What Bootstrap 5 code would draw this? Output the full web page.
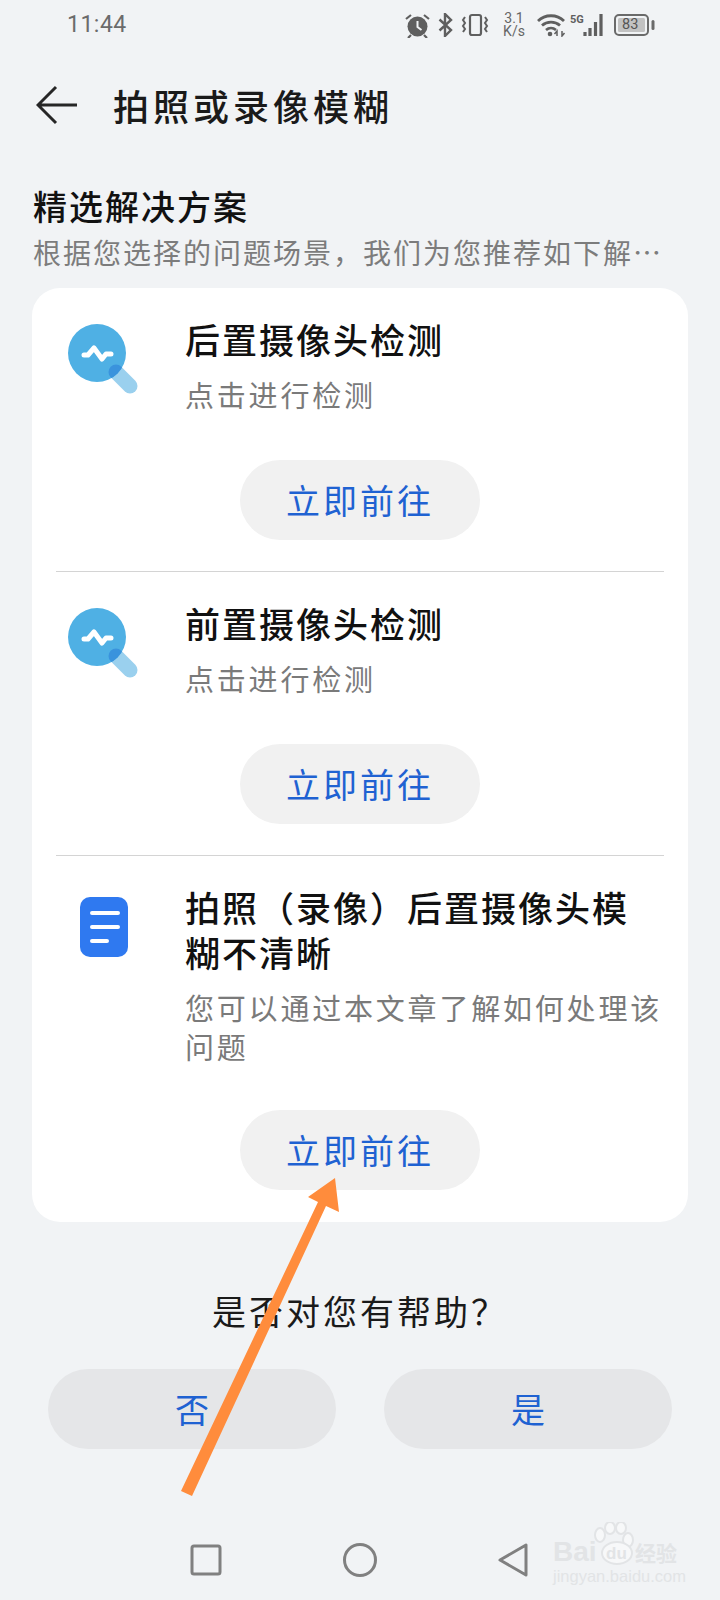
<!DOCTYPE html>
<html lang="zh">
<head>
<meta charset="utf-8">
<title>拍照或录像模糊</title>
<link href="https://cdn.jsdelivr.net/npm/bootstrap@5.3.0/dist/css/bootstrap.min.css" rel="stylesheet">
<style>
html,body{margin:0;background:#f1f3f5}
.screen{width:720px;height:1600px;overflow:hidden;background:#f1f3f5;font-family:"Noto Sans CJK SC","Liberation Sans",sans-serif;color:#111}
.statusbar{height:50px;padding:0 65px 0 67px;color:#666}
.clock{font:400 23px/1 Roboto,sans-serif;letter-spacing:.5px;color:#6b6b6b;margin-top:-1px}
.speed{font:400 14px/13px Roboto,sans-serif;color:#666;width:26px;margin:0 10px 0 12px;text-align:center}
.topbar{height:72px;margin-top:19px;padding-left:36px}
.page-title{font-size:36px;line-height:50px;font-weight:500;letter-spacing:4px;margin:0 0 0 35px;color:#1a1a1a}
.sec-title{font-size:34px;line-height:40px;font-weight:500;letter-spacing:2px;margin:0;color:#111}
.sec-sub{font-size:28px;line-height:36px;letter-spacing:2px;color:#7c7c7c;margin:8px 0 0;white-space:nowrap}
.section-head{margin-top:45px;padding-left:33px;height:80px}
.sol-card{width:656px;margin:22px 0 0 32px;background:#fff;border:0;border-radius:28px;padding:0 24px}
.sol-item{padding:28px 0 31px}
.sol-item:last-child{padding-bottom:32px}
.sol-item:last-child .go-btn{margin-top:44px}
.sol-item+.sol-item{border-top:1px solid #d4d4d4}
.sol-icon{width:129px;flex:none}
.sol-title{font-size:35px;line-height:45px;letter-spacing:2px;font-weight:500;margin:0;color:#111}
.sol-sub{font-size:29px;line-height:39px;letter-spacing:2.8px;color:#7a7a7a;margin:14px 0 0;white-space:nowrap}
.go-btn{display:block;width:240px;height:80px;margin:46px auto 0;background:#f1f1f1;border:0;color:#1f62d2;font-size:34px;line-height:80px;letter-spacing:3px;padding:0}
.question{font-size:34px;line-height:46px;letter-spacing:3px;text-align:center;color:#1a1a1a;margin:66px 0 0}
.answers{margin-top:35px;padding:0 48px;gap:48px}
.ans-btn{width:288px;height:80px;background:#e5e6e8;border:0;color:#1f62d2;font-size:34px;line-height:80px;padding:0}
.navkeys{margin-top:93px;padding-left:189px;gap:119px}
.overlay-arrow{position:absolute;left:0;top:0;pointer-events:none}
.wm{position:absolute;left:553px;top:1520px;width:130px;height:68px;color:#e2e4e6;pointer-events:none}
.wm-bai{position:absolute;left:0;top:17px;font:700 28px/30px "Liberation Sans",sans-serif}
.wm-du{position:absolute;left:53px;top:24px;font:700 17px/20px "Liberation Sans",sans-serif}
.wm-jy{position:absolute;left:82px;top:20px;font-size:21px;line-height:24px;font-weight:700}
.wm-url{position:absolute;left:0;top:47px;font:400 16.5px/18px "Liberation Sans",sans-serif}
</style>
</head>
<body>
<div class="screen position-relative">

  <div class="statusbar d-flex align-items-center">
    <span class="clock">11:44</span>
    <div class="d-flex align-items-center ms-auto">
      <svg width="25" height="25" viewBox="0 0 25 25" class="me-2"><circle cx="12.500" cy="13.500" r="10" fill="#5f5f5f"/><path d="M12.500 8v6l4 3" stroke="#f1f3f5" stroke-width="2" fill="none"/><path d="M1 6l5-4M24 6l-5-4M6 22l-3 3M19 22l3 3" stroke="#5f5f5f" stroke-width="2.200"/></svg>
      <svg width="15" height="24" viewBox="0 0 15 24" class="me-2"><path d="M1.500 6.500 13 17l-6 6V1l6 6L1.500 17.500" stroke="#5f5f5f" stroke-width="2.400" fill="none"/></svg>
      <svg width="28" height="24" viewBox="0 0 28 24"><rect x="9" y="2" width="11" height="20" rx="2" fill="none" stroke="#5f5f5f" stroke-width="2.200"/><path d="M4 4l-2 3 2 3-2 3 2 3-2 3M24 4l2 3-2 3 2 3-2 3 2 3" stroke="#5f5f5f" stroke-width="2" fill="none"/></svg>
      <div class="speed">3.1<br>K/s</div>
      <svg width="29" height="24" viewBox="0 0 29 24"><path d="M1 8c7-7 19-7 26 0M5 12.500c5-4.500 13-4.500 18 0M9 17c3-2.500 7-2.500 10 0" stroke="#5f5f5f" stroke-width="2.800" fill="none"/><circle cx="13" cy="21" r="2.300" fill="#5f5f5f"/><path d="M20 23v-5l-2.500 3M25 18v5l2.500-3" stroke="#5f5f5f" stroke-width="1.500" fill="none"/></svg>
      <svg width="36" height="24" viewBox="0 0 36 24" class="ms-1"><text x="0" y="10" font-family="Roboto,sans-serif" font-size="11" font-weight="700" fill="#5f5f5f">5G</text><path d="M15 19v4M20 15v8M25.500 9v14M31 1v22" stroke="#5f5f5f" stroke-width="3.200" fill="none"/></svg>
      <div class="position-relative ms-2" style="width:41px;height:22px">
        <svg width="41" height="22" viewBox="0 0 41 22" class="position-absolute top-0 start-0"><rect x="1" y="1" width="33" height="20" rx="4" fill="none" stroke="#6a6a6a" stroke-width="2"/><rect x="4" y="4" width="27" height="14" rx="1.500" fill="#c2c2c2"/><rect x="37.500" y="6" width="3" height="10" rx="1.500" fill="#6a6a6a"/></svg>
        <span class="position-absolute" style="left:8px;top:3px;font:400 14.500px/16px Roboto,sans-serif;color:#555">83</span>
      </div>
    </div>
  </div>

  <div class="topbar d-flex align-items-center">
    <svg width="42" height="40" viewBox="0 0 42 40"><path d="M41 20H2M20 2 2 20l18 18" stroke="#262626" stroke-width="3" fill="none"/></svg>
    <h1 class="page-title">拍照或录像模糊</h1>
  </div>

  <div class="section-head">
    <h2 class="sec-title">精选解决方案</h2>
    <p class="sec-sub">根据您选择的问题场景，我们为您推荐如下解…</p>
  </div>

  <div class="card sol-card">
    <div class="sol-item">
      <div class="d-flex">
        <div class="sol-icon">
          <svg width="80" height="80" viewBox="0 0 80 80" style="margin-left:11px;display:block"><defs><clipPath id="lens1"><circle cx="30" cy="37" r="29"/></clipPath></defs><path d="M49 56 63 70" stroke="#9ad0ee" stroke-width="15" stroke-linecap="round"/><circle cx="30" cy="37" r="29" fill="#4fb0e4"/><path d="M49 56 63 70" stroke="#3a93dd" stroke-width="15" stroke-linecap="round" clip-path="url(#lens1)"/><path d="M17 39h4l6-7 8 11 4-5h5" stroke="#fff" stroke-width="5" stroke-linecap="round" stroke-linejoin="round" fill="none"/></svg>
        </div>
        <div>
          <h3 class="sol-title">后置摄像头检测</h3>
          <p class="sol-sub">点击进行检测</p>
        </div>
      </div>
      <button type="button" class="btn rounded-pill go-btn">立即前往</button>
    </div>
    <div class="sol-item">
      <div class="d-flex">
        <div class="sol-icon">
          <svg width="80" height="80" viewBox="0 0 80 80" style="margin-left:11px;display:block"><defs><clipPath id="lens2"><circle cx="30" cy="37" r="29"/></clipPath></defs><path d="M49 56 63 70" stroke="#9ad0ee" stroke-width="15" stroke-linecap="round"/><circle cx="30" cy="37" r="29" fill="#4fb0e4"/><path d="M49 56 63 70" stroke="#3a93dd" stroke-width="15" stroke-linecap="round" clip-path="url(#lens2)"/><path d="M17 39h4l6-7 8 11 4-5h5" stroke="#fff" stroke-width="5" stroke-linecap="round" stroke-linejoin="round" fill="none"/></svg>
        </div>
        <div>
          <h3 class="sol-title">前置摄像头检测</h3>
          <p class="sol-sub">点击进行检测</p>
        </div>
      </div>
      <button type="button" class="btn rounded-pill go-btn">立即前往</button>
    </div>
    <div class="sol-item">
      <div class="d-flex">
        <div class="sol-icon">
          <svg width="60" height="62" viewBox="0 0 60 62" style="margin:13px 0 0 24px;display:block"><rect x="0" y="0" width="48" height="60" rx="10" fill="#2f79f0"/><path d="M12 16h26M12 30h26M12 44h15" stroke="#fff" stroke-width="4" stroke-linecap="round"/></svg>
        </div>
        <div>
          <h3 class="sol-title">拍照（录像）后置摄像头模<br>糊不清晰</h3>
          <p class="sol-sub">您可以通过本文章了解如何处理该<br>问题</p>
        </div>
      </div>
      <button type="button" class="btn rounded-pill go-btn">立即前往</button>
    </div>
  </div>

  <p class="question">是否对您有帮助？</p>
  <div class="answers d-flex">
    <button type="button" class="btn rounded-pill ans-btn">否</button>
    <button type="button" class="btn rounded-pill ans-btn">是</button>
  </div>

  <div class="navkeys d-flex align-items-center">
    <svg width="34" height="34" viewBox="0 0 34 34"><rect x="3" y="3" width="28" height="28" rx="2" fill="none" stroke="#808080" stroke-width="3"/></svg>
    <svg width="36" height="36" viewBox="0 0 36 36"><circle cx="18" cy="18" r="15.500" fill="none" stroke="#808080" stroke-width="3"/></svg>
    <svg width="32" height="36" viewBox="0 0 32 36"><path d="M29 3v30L3 18z" fill="none" stroke="#808080" stroke-width="3" stroke-linejoin="round"/></svg>
  </div>

  <svg class="overlay-arrow" width="720" height="1600" viewBox="0 0 720 1600"><path d="M181 1491 192 1496 326 1206 339 1212 335 1178 308 1197 318 1202z" fill="#ff8c3c"/></svg>

  <div class="wm">
    <svg width="60" height="50" viewBox="0 0 60 50" class="position-absolute" style="left:38px;top:2px"><g fill="#f7f8f9" stroke="#e2e4e6" stroke-width="2"><ellipse cx="9" cy="13" rx="5" ry="7"/><ellipse cx="19" cy="6" rx="5" ry="6"/><ellipse cx="30" cy="6" rx="5" ry="6"/><ellipse cx="37" cy="18" rx="5" ry="7"/><ellipse cx="26" cy="31" rx="15" ry="11"/></g></svg>
    <span class="wm-bai">Bai</span>
    <span class="wm-du">du</span>
    <span class="wm-jy">经验</span>
    <span class="wm-url">jingyan.baidu.com</span>
  </div>

</div>
<script src="https://cdn.jsdelivr.net/npm/bootstrap@5.3.0/dist/js/bootstrap.bundle.min.js"></script>
</body>
</html>
